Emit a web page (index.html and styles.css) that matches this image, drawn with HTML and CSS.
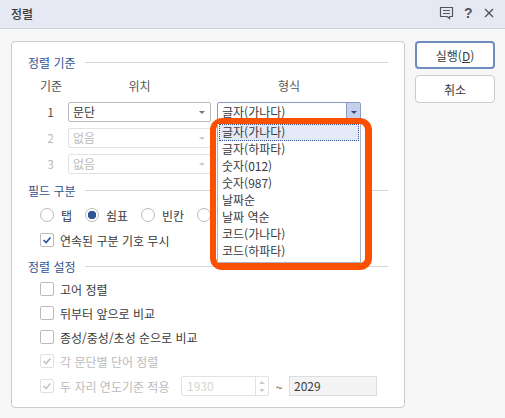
FILE: index.html
```html
<!DOCTYPE html>
<html lang="ko">

<head>
  <meta charset="UTF-8">
  <title>정렬</title>
  <link rel="stylesheet" href="styles.css">
</head>

<body>

  <div class="titlebar">
    <span class="title">정렬</span>
    <div class="title-icons">
      <svg width="15" height="14" viewBox="0 0 15 14" fill="none" stroke="#555" stroke-width="1.2">
        <path d="M1.500 1.500h12v9h-3v2l-2.500-2h-6.500z" />
        <path d="M4 4.500h7M4 7.500h7" />
      </svg>
      <span class="help">?</span>
      <svg width="12" height="12" viewBox="0 0 12 12" fill="none" stroke="#555" stroke-width="1.400">
        <path d="M2 2l8 8M10 2l-8 8" />
      </svg>
    </div>
  </div>

  <div class="content">
    <div class="panel">
      <div class="section-title"><span>정렬 기준</span><i></i></div>

      <div class="sort-grid">
        <div class="head">기준</div>
        <div class="head">위치</div>
        <div class="head">형식</div>

        <div class="num">1</div>
        <div class="select">문단<b></b></div>
        <div class="select-wrap">
          <div class="select active">글자(가나다)<span class="drop-btn"><b></b></span></div>
          <div class="callout">
            <ul class="droplist">
              <li class="selected">글자(가나다)</li>
              <li>글자(하파타)</li>
              <li>숫자(012)</li>
              <li>숫자(987)</li>
              <li>날짜순</li>
              <li>날짜 역순</li>
              <li>코드(가나다)</li>
              <li>코드(하파타)</li>
            </ul>
          </div>
        </div>

        <div class="num off">2</div>
        <div class="select off">없음<b></b></div>
        <div class="select off">없음<b></b></div>

        <div class="num off">3</div>
        <div class="select off">없음<b></b></div>
        <div class="select off">없음<b></b></div>
      </div>

      <div class="section-title second"><span>필드 구분</span><i></i></div>
      <div class="radios">
        <label class="radio"><em></em>탭</label>
        <label class="radio on"><em></em>쉼표</label>
        <label class="radio"><em></em>빈칸</label>
        <label class="radio"><em></em>기타</label>
      </div>
      <label class="check on first"><em><svg viewBox="0 0 14 14"><path d="M3 7l3 3 5-6" /></svg></em>연속된 구분 기호 무시</label>

      <div class="section-title third"><span>정렬 설정</span><i></i></div>
      <div class="options">
        <label class="check"><em></em>고어 정렬</label>
        <label class="check"><em></em>뒤부터 앞으로 비교</label>
        <label class="check"><em></em>종성/중성/초성 순으로 비교</label>
        <label class="check on off"><em><svg viewBox="0 0 14 14"><path d="M3 7l3 3 5-6" /></svg></em>각 문단별 단어 정렬</label>
        <div class="year-row">
          <label class="check on off"><em><svg viewBox="0 0 14 14"><path d="M3 7l3 3 5-6" /></svg></em>두 자리 연도기준 적용</label>
          <div class="spin">1930<span class="spin-btns"><u></u><s></s></span></div>
          <span class="tilde">~</span>
          <div class="year-to">2029</div>
        </div>
      </div>
    </div>

    <div class="side">
      <button class="btn primary">실행(<span class="ul">D</span>)</button>
      <button class="btn">취소</button>
    </div>
  </div>

</body>

</html>
```

FILE: styles.css
```css
* {
  box-sizing: border-box;
}

html, body {
  height: 100%;
}

body {
  margin: 0;
  background-color: #f7f7f7;
  color: #3a3a3a;
  font-family: "Noto Sans CJK KR", "Noto Sans", sans-serif;
  font-size: 12px;
  overflow: hidden;
}

.titlebar {
  height: 29px;
  background-color: #e6e9f4;
  border-bottom: 1px solid #cfd2de;
  display: flex;
  align-items: center;
  justify-content: space-between;
  padding: 0 10px 2px 11px;
}

.title {
  font-size: 12px;
  font-weight: 500;
}

.title-icons {
  display: flex;
  align-items: center;
  gap: 10px;
}

.help {
  font-family: "Liberation Sans", sans-serif;
  font-size: 14px;
  font-weight: bold;
  color: #555;
  width: 9px;
}

.content {
  display: flex;
  gap: 10px;
  padding: 12px 10px 0 11px;
}

.panel {
  width: 395px;
  height: 367px;
  background-color: white;
  border: 1px solid #ccc;
  border-radius: 4px;
  padding: 11px 16px 0 16px;
}

.section-title {
  display: flex;
  align-items: center;
  gap: 9px;
  height: 18px;
  color: #33558f;
}

.section-title i {
  flex: 1;
  height: 1px;
  background-color: #d5d5d5;
}

.section-title.second {
  margin-top: 7px;
}

.section-title.third {
  margin-top: 8px;
}

.sort-grid {
  display: grid;
  grid-template-columns: 34px 143px 144px;
  column-gap: 6px;
  row-gap: 6px;
  margin-top: 6px;
}

.head {
  height: 18px;
  line-height: 18px;
  text-align: center;
  color: #555;
  margin-bottom: 1px;
}

.head:first-child {
  text-align: right;
}

.num {
  line-height: 19px;
  text-align: right;
  padding-right: 8px;
  color: #555;
}

.select {
  position: relative;
  height: 20px;
  line-height: 17px;
  padding-left: 4px;
  background-color: white;
  border: 1px solid #bbb;
  border-radius: 2px;
}

.select b {
  position: absolute;
  right: 5px;
  top: 8px;
  border-left: 3px solid transparent;
  border-right: 3px solid transparent;
  border-top: 3px solid #777;
}

.select.off {
  color: #bbb;
  border-color: #e2e2e2;
}

.select.off b {
  border-top-color: #ccc;
}

.num.off {
  color: #bbb;
}

.select.active {
  border-color: #8a9cc4;
}

.drop-btn {
  position: absolute;
  top: 0;
  right: 0;
  width: 14px;
  height: 18px;
  background-color: #c5d1ea;
  border-left: 1px solid #8a9cc4;
}

.drop-btn b {
  right: 3px;
  top: 8px;
  border-top-color: #2a4a80;
}

.select-wrap {
  position: relative;
}

/* orange annotation around the open list */
.callout {
  position: absolute;
  top: 16px;
  left: -7px;
  width: 162px;
  height: 152px;
  border-style: solid;
  border-color: #fa5000;
  border-width: 6px 7px 7px 6px;
  border-radius: 12px;
  background-color: #fff;
  z-index: 2;
}

.droplist {
  list-style: none;
  margin: 0 0 0 1px;
  padding: 0 1px 1px;
  width: 144px;
  height: 139px;
  background-color: white;
  border: 1px solid #a9b2c6;
  border-top: none;
}

.droplist li {
  height: 17px;
  line-height: 16px;
  padding-left: 3px;
}

.droplist li.selected {
  background-color: #e4e9f8;
  outline: 1px dotted #33558f;
  outline-offset: -1px;
}

.radios {
  display: flex;
  margin-top: 7px;
  padding-left: 12px;
}

.radio {
  display: flex;
  align-items: center;
  gap: 7px;
  width: 56px;
  height: 18px;
}

.radio:first-child {
  width: 45px;
}

.radio em {
  width: 14px;
  height: 14px;
  border: 1px solid #bbb;
  border-radius: 50%;
  background-color: white;
  flex: none;
}

.radio.on em {
  border-color: #bbb;
  background: radial-gradient(circle, #2f5597 0 4px, white 4.500px);
}

.check {
  display: flex;
  align-items: center;
  gap: 6px;
  height: 18px;
  white-space: nowrap;
}

.check em {
  width: 14px;
  height: 14px;
  border: 1px solid #bbb;
  border-radius: 2px;
  background-color: white;
  flex: none;
}

.check svg {
  display: block;
  width: 12px;
  height: 12px;
  fill: none;
  stroke: #2f5597;
  stroke-width: 2;
}

.check.off {
  color: #bbb;
}

.check.off em {
  border-color: #e0e0e0;
}

.check.off svg {
  stroke: #c4c4c4;
}

.check.first {
  margin: 7px 0 0 12px;
}

.options {
  display: flex;
  flex-direction: column;
  gap: 6px;
  margin-top: 5px;
  padding-left: 12px;
}

.year-row {
  display: flex;
  align-items: center;
}

.year-row .check {
  width: 141px;
}

.spin {
  position: relative;
  width: 88px;
  height: 20px;
  line-height: 17px;
  padding-left: 5px;
  color: #d5d5d5;
  background-color: white;
  border: 1px solid #e2e2e2;
  border-radius: 2px;
}

.spin-btns {
  position: absolute;
  right: 0;
  top: 0;
  width: 13px;
  height: 18px;
  border-left: 1px solid #e2e2e2;
}

.spin-btns u, .spin-btns s {
  position: absolute;
  left: 3px;
  border-left: 3px solid transparent;
  border-right: 3px solid transparent;
}

.spin-btns u {
  top: 4px;
  border-bottom: 3px solid #ccc;
}

.spin-btns s {
  bottom: 3px;
  border-top: 3px solid #ccc;
}

.tilde {
  width: 20px;
  text-align: center;
  color: #555;
}

.year-to {
  width: 88px;
  height: 20px;
  line-height: 17px;
  padding-left: 4px;
  background-color: #f4f4f4;
  border: 1px solid #ddd;
}

.side {
  display: flex;
  flex-direction: column;
  gap: 6px;
}

.btn {
  width: 80px;
  height: 28px;
  padding: 0;
  font-family: inherit;
  font-size: 12px;
  color: #3a3a3a;
  background-color: white;
  border: 1px solid #ccc;
  border-radius: 4px;
}

.btn.primary {
  border: 2px solid #6f8cc0;
}

.ul {
  text-decoration: underline;
}
```
